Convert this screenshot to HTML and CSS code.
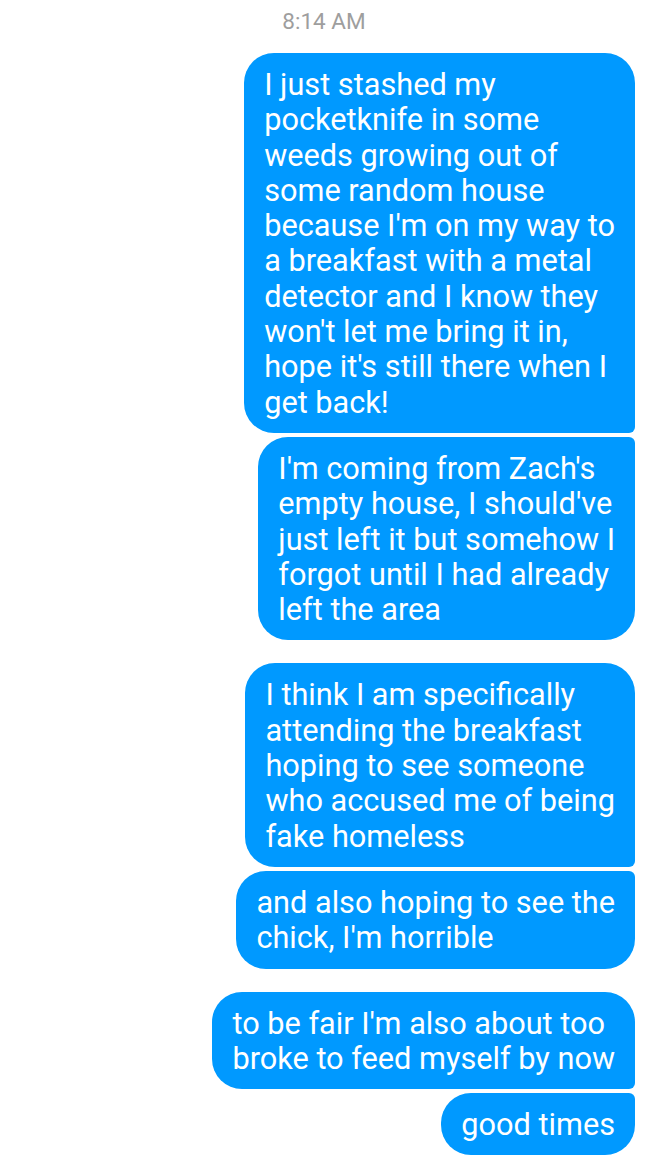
FILE: index.html
```html
<!DOCTYPE html>
<html>
<head>
<meta charset="utf-8">
<link rel="stylesheet" href="styles.css">
</head>
<body>
<div class="thread">
  <div class="time">8:14 AM</div>
  <div class="group">
    <div class="bubble first">I just stashed my<br>pocketknife in some<br>weeds growing out of<br>some random house<br>because I'm on my way to<br>a breakfast with a metal<br>detector and I know they<br>won't let me bring it in,<br>hope it's still there when I<br>get back!</div>
    <div class="bubble last">I'm coming from Zach's<br>empty house, I should've<br>just left it but somehow I<br>forgot until I had already<br>left the area</div>
  </div>
  <div class="group">
    <div class="bubble first">I think I am specifically<br>attending the breakfast<br>hoping to see someone<br>who accused me of being<br>fake homeless</div>
    <div class="bubble last">and also hoping to see the<br>chick, I'm horrible</div>
  </div>
  <div class="group">
    <div class="bubble first">to be fair I'm also about too<br>broke to feed myself by now</div>
    <div class="bubble last">good times</div>
  </div>
</div>
</body>
</html>
```

FILE: styles.css
```css
html, body {
  margin: 0;
  padding: 0;
  background: #ffffff;
}
.thread {
  display: flex;
  flex-direction: column;
  align-items: flex-end;
  gap: 23px;
  padding: 7px 13px 0 0;
  font-family: Roboto, "Noto Sans", sans-serif;
}
.time {
  align-self: stretch;
  text-align: center;
  padding-left: 13px;
  font-size: 22.5px;
  line-height: 28px;
  color: #9e9e9e;
  margin-bottom: -5px;
}
.group {
  display: flex;
  flex-direction: column;
  align-items: flex-end;
  gap: 4px;
}
.bubble {
  background: #0099ff;
  color: #ffffff;
  font-size: 30.7px;
  line-height: 35.3px;
  padding: 14px 20px 13px 20px;
  white-space: nowrap;
  border-radius: 30px;
}
.bubble.first {
  border-bottom-right-radius: 6px;
}
.bubble.last {
  border-top-right-radius: 6px;
}
```
